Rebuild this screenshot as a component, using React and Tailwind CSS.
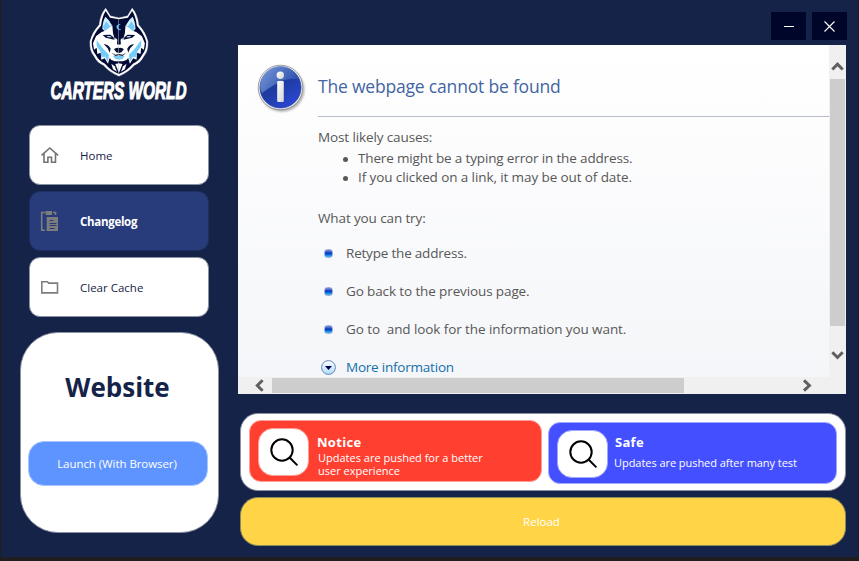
import React from "react";

function Wolf() {
  const half = (
    <g>
      <path d="M102 42 L76 36 L62 13 Q46 32 43 62 Q22 84 15 112 Q14 142 27 156 Q36 176 56 184 Q72 204 102 216 Z" fill="#fff" stroke="#fff" strokeWidth="1.5" />
      <path d="M102 46 L75 41 L62 21 Q51 38 48 65 Q27 87 20 113 Q20 139 32 152 Q41 170 60 179 Q76 199 102 210 Z" fill="#020a35" />
      <path d="M61 38 Q53 52 52 74 L61 84 L81 64 Q73 47 61 38Z" fill="#d2f1ff" />
      <path d="M64 52 L54 68 L61 84 L76 68Z" fill="#76c9fa" />
      <path d="M82 64 L61 80 L50 84 L33 97 L24 118 L27 137 L35 131 L37 150 L47 146 L49 167 L59 163 L69 179 L74 162 L79 168 L90 172 L102 172 L102 122 L96 121 L97 107 L91 101 L90 108 L84 88Z" fill="#fff" />
      <path d="M35 108 L35 126 L47 144 L49 160 L60 158 L69 174 L72 152 L55 135Z" fill="#74cdf9" />
      <path d="M53 93 L76 92 L85 99 L88 107 L75 104 L62 101 Z" fill="#071039" />
      <path d="M65 96 L77 97 L80 100 L69 100Z" fill="#e4f6ff" />
      <path d="M56 120 Q70 121 77 134 L74 146 L68 133Z" fill="#0a143d" />
      <path d="M87 136 Q92 130 102 132 L102 147 L94 145Z" fill="#07102f" />
      <path d="M80 146 L91 152 L102 150 L102 154 L91 156Z" fill="#07102f" />
      <path d="M84 155 L102 156 L102 167 L91 165Z" fill="#74cdf9" />
      <path d="M79 179 L89 187 L96 203 L84 196Z" fill="#fff" />
      <path d="M91 180 L102 178 L102 207 Z" fill="#fff" />
    </g>
  );
  return (
    <svg className="h-[75px] w-[70px]" viewBox="0 0 210 225">
      {half}
      <g transform="translate(203.6 0) scale(-1 1)">{half}</g>
      <path d="M106 61 Q94 62 95 70 Q97 80 108 77 Q100 77 99 69 Q100 63 106 61Z" fill="#78cfff" stroke="#78cfff" strokeWidth="1" />
    </svg>
  );
}

function HomeIcon() {
  return (
    <svg className="h-5 w-5" viewBox="0 0 20 20" fill="none" stroke="#737373" strokeWidth="1.6">
      <path d="M1.5 10.3 9.8 3l8.3 7.3M4 8.5v8.7h3.9v-5h3.6v5h4V8.5" />
    </svg>
  );
}

function ClipboardIcon() {
  return (
    <svg className="h-[22px] w-5" viewBox="0 0 20 22">
      <path d="M5 2.5H1.7v17.8H5M13 2.5h2.5V5" fill="none" stroke="#7d7d7d" strokeWidth="1.6" />
      <path d="M5.500 1h6.500v4H5.500zM6.700 7H18v14H6.700z" fill="#7d7d7d" />
      <path d="M9.500 10.500h4M9.500 13.500h7M9.500 15.500h7M9.500 18.500h5" stroke="#283b7a" strokeWidth="1" />
    </svg>
  );
}

function FolderIcon() {
  return (
    <svg className="h-5 w-5" viewBox="0 0 20 20" fill="none" stroke="#7d7d7d" strokeWidth="1.6">
      <path d="M1.800 4.800h5.600l1.300 1.300h8.800v9.800H1.800z" />
    </svg>
  );
}

function SearchIcon() {
  return (
    <svg className="ml-px h-[29px] w-[29px]" viewBox="0 0 29 29" fill="none" stroke="#000" strokeWidth="2">
      <circle cx="12" cy="12" r="10.7" />
      <path d="m19.800 19.800 7.600 7.600" />
    </svg>
  );
}

function InfoIcon() {
  return (
    <svg className="h-[50px] w-[50px]" viewBox="0 0 50 50">
      <defs>
        <linearGradient id="disc" x1="0" y1="0" x2="0.7" y2="1">
          <stop offset="0" stopColor="#3c62bb" />
          <stop offset=".5" stopColor="#1d3b9f" />
          <stop offset="1" stopColor="#2d46d2" />
        </linearGradient>
        <linearGradient id="gloss" x1="0" y1="0" x2="1" y2="0.5">
          <stop offset="0" stopColor="#8fafe5" />
          <stop offset="1" stopColor="#3156b2" />
        </linearGradient>
        <linearGradient id="letter" x1="0" y1="0" x2="1" y2="1">
          <stop offset="0" stopColor="#fff" />
          <stop offset="1" stopColor="#d4d4d4" />
        </linearGradient>
        <filter id="soft"><feGaussianBlur stdDeviation="1" /></filter>
      </defs>
      <circle cx="25" cy="25.5" r="22.3" fill="#777" opacity=".6" filter="url(#soft)" />
      <circle cx="23.500" cy="23.500" r="22.3" fill="#f4f4f4" stroke="#868686" strokeWidth=".8" />
      <circle cx="23.500" cy="23.500" r="20.6" fill="url(#disc)" stroke="#24439a" strokeWidth=".6" />
      <path d="M3.500 25A20 20 0 0 1 42 15Q28 14 19 20Q10 25 5 29Z" fill="url(#gloss)" opacity=".75" />
      <circle cx="23.300" cy="11.200" r="3.7" fill="url(#letter)" />
      <rect x="20.200" y="17" width="6.600" height="21" rx="1.2" fill="url(#letter)" />
    </svg>
  );
}

function Bead() {
  return <span className="-mt-px block h-[9px] w-[9px] rounded-[3.5px] border border-[#9aa6cf] bg-linear-to-b from-[#7b92da] via-[#0b2fc0] via-45% to-[#42c4fb]" />;
}

function NavItem({ icon, label, active }) {
  return (
    <button
      className={
        active
          ? "flex h-[60px] w-[180px] items-center rounded-[11px] border border-[#1f2f61] bg-[#283b7a] pl-[10px] text-[11.5px] font-bold text-white"
          : "flex h-[60px] w-[180px] items-center rounded-[11px] border border-[#8a91a3] bg-white pl-[10px] text-[11.5px] text-[#162348]"
      }
    >
      <span className="w-10 shrink-0">{icon}</span>
      <span className={active ? "pt-[2px] tracking-[-0.3px]" : "pt-[2px]"}>{label}</span>
    </button>
  );
}

function Chevron({ d, className }) {
  return (
    <svg className={className} viewBox="0 0 17 17" fill="none" stroke="#606060" strokeWidth="3">
      <path d={d} />
    </svg>
  );
}

export default function App() {
  return (
    <div className="h-[561px] w-[859px] overflow-hidden border-r border-b-4 border-l border-[#1f1d1e] bg-[#162348] font-['Open_Sans','Noto_Sans',sans-serif]">
      <div className="relative flex h-[557px]">
        <div className="absolute -left-px top-[81px] h-[12px] w-px border-y border-[#c8c8c8]" />
        <div className="absolute -left-px top-[174px] h-[11px] w-px border-y border-[#a8a8b4]" />
        <div className="absolute -left-px top-[191px] h-[14px] w-px bg-[#b8860b]" />

        <aside className="flex w-[237px] shrink-0 flex-col pt-1">
          <div className="h-[121px]">
            <div className="ml-[84px] h-[69px]"><Wolf /></div>
            <svg className="ml-[46px] h-[36px] w-[145px] overflow-visible" viewBox="0 0 145 36">
              <text x="3.5" y="25.500" textLength="136" lengthAdjust="spacingAndGlyphs" fontFamily="Liberation Sans, sans-serif" fontSize="24.5" fontWeight="700" fontStyle="italic" fill="#fff" stroke="#fff" strokeWidth="1.2">CARTERS WORLD</text>
            </svg>
          </div>
          <nav className="ml-7 flex flex-col gap-[6px]">
            <NavItem icon={<HomeIcon />} label="Home" />
            <NavItem icon={<ClipboardIcon />} label="Changelog" active />
            <NavItem icon={<FolderIcon />} label="Clear Cache" />
          </nav>
          <section className="ml-[19px] mt-[15px] flex h-[201px] w-[199px] flex-col rounded-[38px] border border-[#8a91a3] bg-white px-[7px] pt-[35px]">
            <h2 className="h-[73px] pr-[4px] text-center text-[26px] font-bold leading-[38px] text-[#162348]">Website</h2>
            <button className="h-[45px] w-[180px] rounded-[16px] border border-[#a8c6ff] bg-[#5e94ff] pr-[2px] text-[11.5px] tracking-[-0.07px] text-white">Launch (With Browser)</button>
          </section>
        </aside>

        <main className="flex w-[620px] flex-col">
          <div className="flex h-[45px] justify-end gap-[6px] pr-[11px] pt-3">
            <button className="flex h-7 w-[35px] items-center justify-center bg-[#00062a]">
              <span className="h-px w-[10px] bg-white" />
            </button>
            <button className="flex h-7 w-[35px] items-center justify-center bg-[#00062a]">
              <svg className="h-[11px] w-[11px]" viewBox="0 0 11 11" stroke="#fff" strokeWidth="1.1"><path d="m.5.5 10 10m0-10-10 10" /></svg>
            </button>
          </div>

          <div className="grid h-[349px] w-[608px] grid-cols-[591px_17px] grid-rows-[332px_17px] bg-[#f0f0f0]">
            <div className="flex overflow-hidden whitespace-nowrap bg-linear-to-b from-white to-[#f5f6f9] tracking-[-0.12px] text-[#575757]">
              <div className="w-20 shrink-0 pl-[19px] pt-[19px]"><InfoIcon /></div>
              <div className="w-[511px] shrink-0">
                <h1 className="h-[72px] border-b border-[#b6bccb] pt-[29px] text-[17.5px] leading-[25px] tracking-[-0.19px] text-[#4465a2]">The webpage cannot be found</h1>
                <p className="mt-[11px] text-[13.5px] leading-[19px]">Most likely causes:</p>
                <ul className="mt-[2px] text-[13.5px] leading-[19px]">
                  <li className="flex items-center tracking-[-0.15px]"><span className="ml-[25px] mr-[10px] mt-px h-[5px] w-[5px] rounded-full bg-[#575757]" />There might be a typing error in the address.</li>
                  <li className="flex items-center tracking-[-0.1px]"><span className="ml-[25px] mr-[10px] mt-px h-[5px] w-[5px] rounded-full bg-[#575757]" />If you clicked on a link, it may be out of date.</li>
                </ul>
                <p className="mt-[22px] text-[13.5px] leading-[19px]">What you can try:</p>
                <ul className="mt-4 flex flex-col gap-[19px] text-[13.5px] leading-[19px]">
                  <li className="flex items-center gap-[13px] pl-[6px] tracking-[-0.2px]"><Bead />Retype the address.</li>
                  <li className="flex items-center gap-[13px] pl-[6px]"><Bead />Go back to the previous page.</li>
                  <li className="flex items-center gap-[13px] whitespace-pre pl-[6px] tracking-[-0.09px]"><Bead />Go to  and look for the information you want.</li>
                  <li className="flex items-center gap-[10px] pl-[3px] tracking-[-0.22px] text-[#1370ab]">
                    <svg className="-mt-px h-[15px] w-[15px]" viewBox="0 0 15 15">
                      <defs><linearGradient id="more" x1="0" y1="0" x2="0" y2="1"><stop stopColor="#fff" /><stop offset="1" stopColor="#b0dcf7" /></linearGradient></defs>
                      <circle cx="7.500" cy="7.500" r="6.9" fill="url(#more)" stroke="#5e84bd" />
                      <path d="M4 6h7L7.500 10z" fill="#00005c" />
                    </svg>
                    More information
                  </li>
                </ul>
              </div>
            </div>
            <div className="flex flex-col items-center">
              <div className="h-[34px] pt-[13px]"><Chevron className="h-[17px] w-[17px]" d="m3.300 11.500 5.200-5.400 5.200 5.400" /></div>
              <div className="h-[247px] w-[15px] bg-[#cdcdcd]" />
              <Chevron className="mt-[20px] h-[17px] w-[17px]" d="m3.300 6.300 5.200 5.200 5.200-5.200" />
            </div>
            <div className="flex items-center">
              <Chevron className="ml-[13px] mr-1 h-[17px] w-[17px]" d="m11.600 3.300-5.300 5.200 5.300 5.200" />
              <div className="h-[15px] w-[412px] bg-[#cdcdcd]" />
              <Chevron className="ml-[114px] h-[17px] w-[17px]" d="m6 3.300 5.400 5.200L6 13.700" />
            </div>
            <div />
          </div>

          <section className="ml-[2px] mt-[19px] flex h-[78px] w-[606px] gap-[6px] rounded-[18px] border border-[#8a91a3] bg-white pl-2 pt-[6px] text-white">
            <div className="flex h-[62px] w-[293px] rounded-[12px] border border-[#ff9f97] bg-[#ff4031] pl-2 pt-[7px]">
              <div className="flex h-12 w-[51px] shrink-0 items-center justify-center rounded-[15px] border border-[#ffa098] bg-white"><SearchIcon /></div>
              <div className="pl-[8px] pt-[5px]">
                <h3 className="text-[13px] font-bold leading-[18px] tracking-[0.3px]">Notice</h3>
                <p className="w-[200px] pl-px text-[11px] leading-[13px]">Updates are pushed for a better<br />user experience</p>
              </div>
            </div>
            <div className="mt-[2px] flex h-[62px] w-[289px] rounded-[12px] border border-[#a1a8ff] bg-[#4450ff] pl-2 pt-[7px]">
              <div className="flex h-12 w-[51px] shrink-0 items-center justify-center rounded-[15px] border border-[#a2a8ff] bg-white"><SearchIcon /></div>
              <div className="pl-[6px] pt-[3px]">
                <h3 className="pl-px text-[13px] font-bold leading-[18px] tracking-[0.3px]">Safe</h3>
                <p className="whitespace-nowrap pt-[5px] text-[11px] leading-[14px] tracking-[-0.05px]">Updates are pushed after many test</p>
              </div>
            </div>
          </section>
          <button className="ml-[2px] mt-[6px] h-[49px] w-[606px] rounded-[18px] border border-[#8a8a60] bg-[#ffd446] pr-[3px] text-[11.5px] text-white">Reload</button>
        </main>
      </div>
    </div>
  );
}
